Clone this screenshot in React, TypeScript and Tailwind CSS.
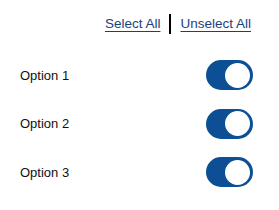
import React, { useState } from 'react';

const Toggle: React.FC<{ on: boolean; onClick: () => void }> = ({ on, onClick }) => (
    <button
        onClick={onClick}
        className={`relative w-[47px] h-[30px] rounded-full flex items-center px-[3px] ${on ? 'bg-[#0c4f94] justify-end' : 'bg-gray-300 justify-start'}`}
    >
        <span className="w-[25px] h-[25px] rounded-full bg-white block" />
    </button>
);

export default function App() {
    const [options, setOptions] = useState([true, true, true]);

    const setAll = (v: boolean) => setOptions(options.map(() => v));

    return (
        <div className="w-[279px] h-[210px] bg-white pl-[20px] pr-[26px] pt-[14px] font-['Liberation_Sans',Arial,sans-serif] text-[13px] text-[#111]">
            <div className="flex justify-end items-center h-[20px] pr-[2px] text-[13.5px]">
                <button onClick={() => setAll(true)} className="text-[#1b3f7d] underline underline-offset-[3px]">
                    Select All
                </button>
                <span className="w-[2px] h-[20px] bg-black mx-[9px]" />
                <button onClick={() => setAll(false)} className="text-[#1b3f7d] underline underline-offset-[3px]">
                    Unselect All
                </button>
            </div>
            <div className="mt-[17px]">
                {options.map((on, i) => (
                    <div key={i} className="flex items-center justify-between h-[48.5px]">
                        <span>Option {i + 1}</span>
                        <Toggle on={on} onClick={() => setOptions(options.map((o, j) => (j === i ? !o : o)))} />
                    </div>
                ))}
            </div>
        </div>
    );
}
